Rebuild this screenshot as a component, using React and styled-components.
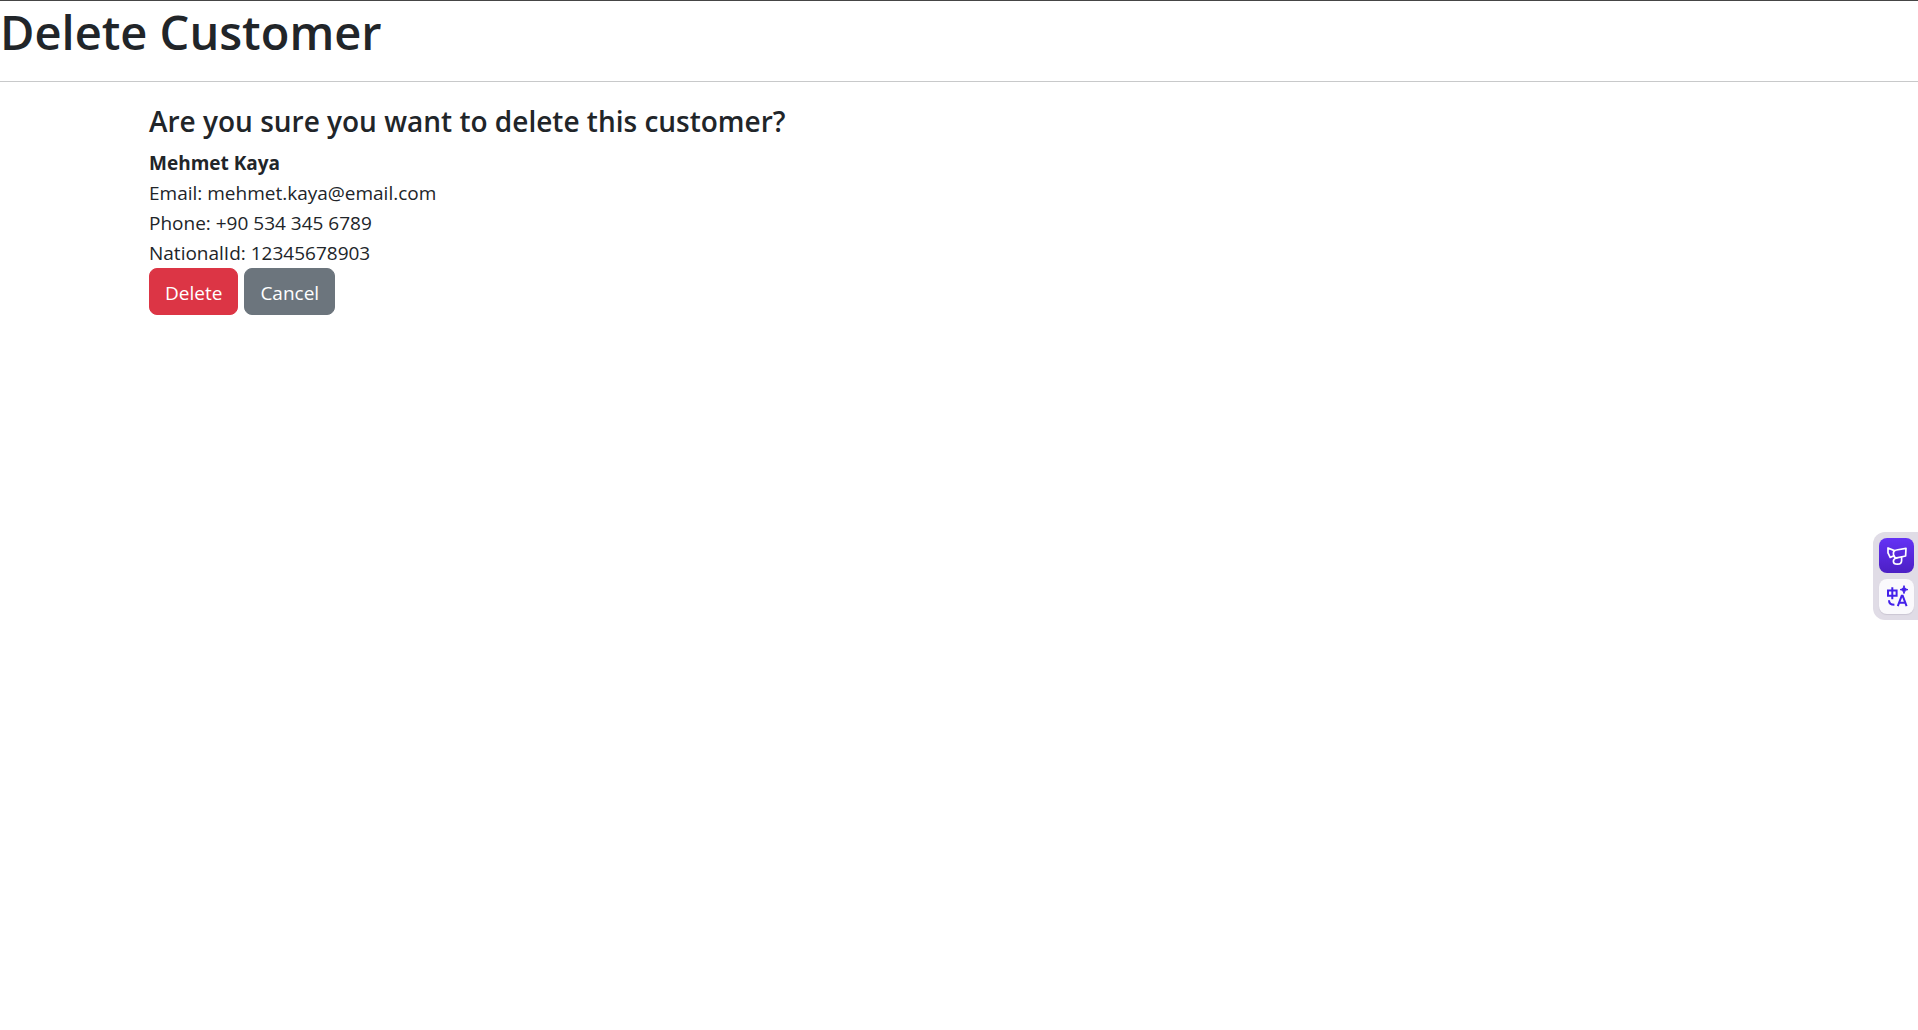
import React from "react";
import styled, { createGlobalStyle } from "styled-components";

const GlobalStyle = createGlobalStyle`
  *, *::before, *::after { box-sizing: border-box; }
  body {
    margin: 0;
    background: #fff;
    color: #212529;
    font-family: "Segoe UI", "Open Sans", "Noto Sans", sans-serif;
    font-size: 19px;
    line-height: 30px;
  }
`;

const Page = styled.div`
  border-top: 1px solid #454545;
`;

const Title = styled.h1`
  margin: 0 0 18px;
  font-size: 47px;
  font-weight: 600;
  line-height: 62px;
`;

const Divider = styled.hr`
  margin: 0 0 20px;
  border: 0;
  border-top: 1px solid #c8c9ca;
`;

const Container = styled.main`
  max-width: 1650px;
  margin: 0 auto;
  padding: 0 15px;
`;

const Question = styled.h4`
  margin: 0 0 8px;
  font-size: 28px;
  font-weight: 600;
  line-height: 38px;
`;

const Details = styled.div`
  display: flex;
  flex-direction: column;
`;

const Name = styled.strong`
  font-weight: 700;
`;

const Actions = styled.form`
  display: flex;
  gap: 6px;
`;

const buttonColors = { danger: "#dc3545", secondary: "#6c757d" };

const Button = styled.button`
  padding: 9px 15px 6px;
  border: 1px solid ${(p) => buttonColors[p.$variant]};
  border-radius: 8px;
  background: ${(p) => buttonColors[p.$variant]};
  color: #fff;
  font: inherit;
  text-decoration: none;
  cursor: pointer;
`;

const Dock = styled.aside`
  position: fixed;
  top: 532px;
  right: 0;
  display: flex;
  flex-direction: column;
  gap: 6px;
  padding: 6px 4px 6px 6px;
  border-radius: 12px 0 0 12px;
  background: #e0dce6;
`;

const DockButton = styled.button`
  width: 35px;
  height: 35px;
  padding: 0;
  border: 0;
  border-radius: 8px;
  background: ${(p) => (p.$primary ? "linear-gradient(#6432f5, #4c1fc4)" : "#faf9fc")};
  box-shadow: ${(p) => (p.$primary ? "none" : "0 1px 1px #cbc6d3")};
  cursor: pointer;

  svg { display: block; }
`;

function RibbonIcon() {
  return (
    <svg width="35" height="35" viewBox="0 0 35 35" fill="none" stroke="#fff" strokeWidth="1.7" strokeLinejoin="round" strokeLinecap="round" aria-hidden="true">
      <path d="M15.400 12.600 9 10v4.800l2.200 4.600 3.800-1.600" />
      <path d="M14.400 15c0-2 1-2.800 3-3l9.600-1.600-.4 7.600-8.800 1.800c-2 .3-3.400-1.200-3.400-4.800Z" />
      <path d="M22.600 19.200v3.600c0 1.800-1.400 3.400-4.200 3.400-2.400 0-4-1.200-4-3s1.400-2.800 3.400-3.200" />
    </svg>
  );
}

function TranslateIcon() {
  return (
    <svg width="35" height="35" viewBox="0 0 35 35" fill="none" stroke="#4320ea" strokeWidth="2" aria-hidden="true">
      <path d="M9 11.500h8.600v5.200H9zM13.300 8.200v12" />
      <path d="M10 21.200c0 3.200 1.400 4.600 5.400 4.600" />
      <path d="m18.800 27.200 3.900-10.400h1l3.900 10.400M20 23.800h6.400" />
      <path d="M25 6.600c.6 2.600 1.400 3.400 4 4-2.600.6-3.400 1.400-4 4-.6-2.600-1.400-3.400-4-4 2.600-.6 3.400-1.400 4-4Z" fill="#4320ea" strokeWidth="1" />
    </svg>
  );
}

export default function App() {
  return (
    <Page>
      <GlobalStyle />
      <Title>Delete Customer</Title>
      <Divider />
      <Container>
        <Question>Are you sure you want to delete this customer?</Question>
        <Details>
          <Name>Mehmet Kaya</Name>
          <span>Email: mehmet.kaya@email.com</span>
          <span>Phone: +90 534 345 6789</span>
          <span>NationalId: 12345678903</span>
        </Details>
        <Actions onSubmit={(e) => e.preventDefault()}>
          <Button type="submit" $variant="danger">Delete</Button>
          <Button as="a" href="#customers" $variant="secondary">Cancel</Button>
        </Actions>
      </Container>
      <Dock aria-label="Assistant">
        <DockButton type="button" $primary aria-label="Open assistant"><RibbonIcon /></DockButton>
        <DockButton type="button" aria-label="Translate page"><TranslateIcon /></DockButton>
      </Dock>
    </Page>
  );
}
